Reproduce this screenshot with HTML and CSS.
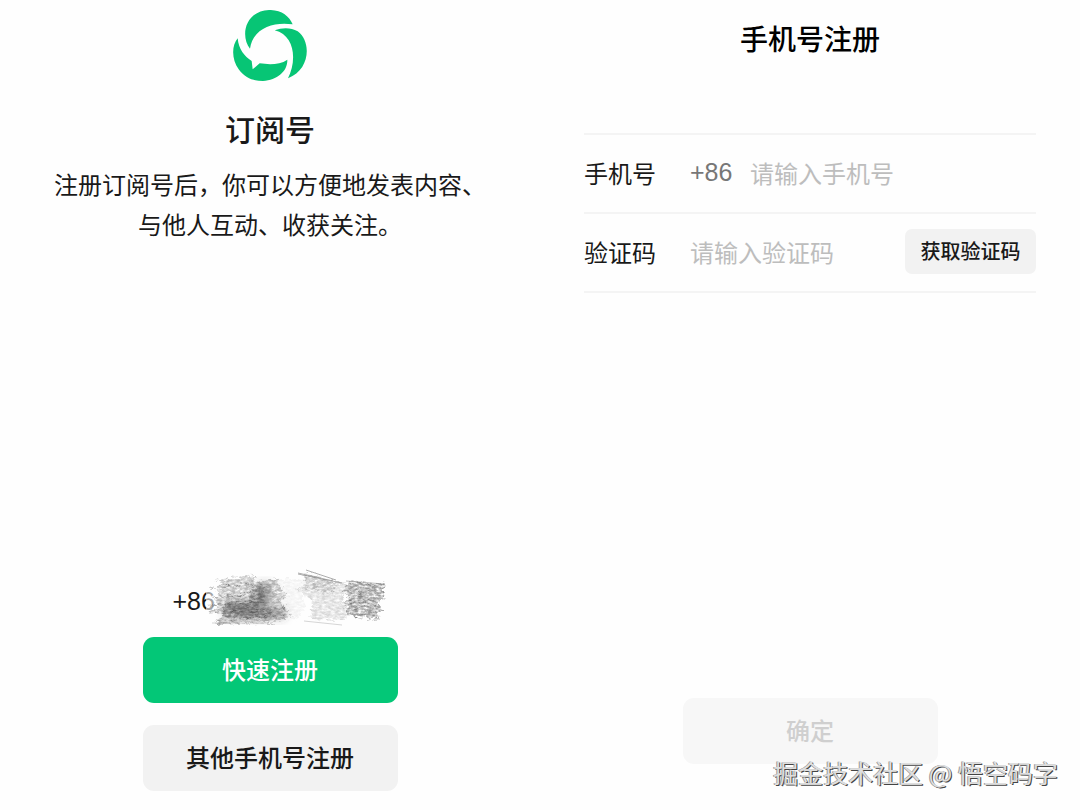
FILE: index.html
```
<!DOCTYPE html>
<html lang="zh-CN">

<head>
  <meta charset="UTF-8" />
  <meta name="viewport" content="width=device-width, initial-scale=1.0" />
  <title>手机号注册</title>
  <link rel="stylesheet" href="styles.css">
</head>

<body>
  <main class="page">
    <!-- 订阅号介绍 -->
    <section class="panel intro">
      <svg class="logo" viewBox="40 30 225 216" aria-hidden="true">
        <path d="M91 146 C62 110 74 34 148 30 C184 29 209 48 219 73 C163 64 99 84 91 146 Z" />
        <path d="M165 91 C188 82 214 82 234 94 C276 124 272 210 205 235 C232 182 226 106 165 91 Z" />
        <path d="M54 115 C36 137 35 176 57 208 C78 237 104 243 130 243 C173 240 204 214 203 179 C180 195 148 194 120 190 L99 208 L96 183 C74 169 57 148 54 115 Z" />
      </svg>
      <h1 class="intro-title">订阅号</h1>
      <p class="intro-text">注册订阅号后，你可以方便地发表内容、<br>与他人互动、收获关注。</p>

      <div class="actions">
        <div class="phone">
          <span class="phone-number">+86</span>
          <!-- 涂抹遮挡手机号 -->
          <svg class="scribble" viewBox="0 0 190 72" aria-hidden="true">
            <defs>
              <filter id="pencil" x="-5%" y="-10%" width="110%" height="120%">
                <feTurbulence type="fractalNoise" baseFrequency="0.22 0.5" numOctaves="3" seed="4" result="grain" />
                <feColorMatrix in="grain" type="matrix" values="0 0 0 0 0  0 0 0 0 0  0 0 0 0 0  0 0 0 2 -0.4" result="holes" />
                <feDisplacementMap in="SourceGraphic" in2="grain" scale="9" xChannelSelector="R" yChannelSelector="G" result="rough" />
                <feComposite in="rough" in2="holes" operator="in" />
                <feGaussianBlur stdDeviation="0.6" />
              </filter>
              <filter id="soft" x="-20%" y="-20%" width="140%" height="140%">
                <feGaussianBlur stdDeviation="4" />
              </filter>
            </defs>
            <path fill="#fefefe" opacity="0.6" d="M2 14 L26 14 L25 46 L2 46 Z" />
            <g filter="url(#pencil)">
              <path fill="#888" d="M12 14 L52 9 L51 16 L73 13 L78 24 L84 30 L76 36 L83 44 L82 54 L10 58 L20 49 L5 46 L16 40 L10 34 L17 28 L11 23 L20 18 Z" opacity="0.6" />
              <path fill="#888" d="M96 7 L144 19 L139 31 L143 54 L106 53 L108 34 L92 24 L105 17 Z" opacity="0.32" />
              <path fill="#888" d="M104 8 L136 17 L126 28 L98 22 Z" opacity="0.4" />
              <path fill="#777" d="M144 15 L182 18 L178 27 L180 31 L174 37 L178 43 L174 47 L176 54 L143 49 L140 38 L145 31 L140 25 Z" opacity="0.75" />
              <path fill="#999" d="M73 13 L102 13 L96 26 L103 40 L92 54 L80 48 Z" opacity="0.12" />
              <g fill="none" stroke="#666" stroke-width="1" opacity="0.6">
                <path d="M6 22 L50 18 M8 32 L60 26 M4 40 L52 36 M5 47 L85 42 M12 53 L88 50 M12 57 L69 57" />
                <path d="M147 19 L181 22 M144 25 L179 28 M146 30 L180 33 M142 36 L176 40 M146 42 L177 45 M144 48 L175 52" />
              </g>
            </g>
            <g filter="url(#soft)">
              <path fill="#444" opacity="0.5" d="M22 36 L50 35 L54 18 L66 17 L66 34 L60 42 L82 44 L80 52 L20 51 Z" />
            </g>
            <g filter="url(#pencil)">
              <path fill="#444" d="M20 36 L46 35 L48 20 L58 19 L60 34 L52 42 L68 44 L64 53 L18 51 Z" opacity="0.4" />
            </g>
            <g fill="none" stroke="#777" opacity="0.6">
              <path d="M94 7 L129 15 M102 4 L132 14 M94 8 L138 17" />
              <path d="M8 57 L65 57 M100 55 L138 59" opacity="0.5" />
              <path d="M142 15 L180 18" opacity="0.8" />
            </g>
            <path fill="none" stroke="#fff" stroke-width="2" opacity="0.7" d="M162 70 L174 69 L180 69" />
          </svg>
        </div>
        <button class="button button-primary" type="button">快速注册</button>
        <button class="button button-default" type="button">其他手机号注册</button>
      </div>
    </section>

    <!-- 手机号注册表单 -->
    <form class="panel register">
      <h2 class="register-title">手机号注册</h2>
      <div class="fields">
        <div class="field">
          <label class="field-label" for="phone">手机号</label>
          <span class="field-code">+86</span>
          <input class="field-input" id="phone" type="tel" placeholder="请输入手机号">
        </div>
        <div class="field">
          <label class="field-label" for="code">验证码</label>
          <input class="field-input" id="code" type="text" placeholder="请输入验证码">
          <button class="code-button" type="button">获取验证码</button>
        </div>
      </div>
      <button class="button button-confirm" type="submit" disabled>确定</button>
    </form>
  </main>

  <div class="watermark">掘金技术社区 @ 悟空码字</div>
</body>

</html>
```
FILE: styles.css
```
* {
  box-sizing: border-box;
}

body {
  margin: 0;
  background: #fefefe;
  color: #191919;
  font-family: "Noto Sans CJK SC", sans-serif;
  font-size: 24px;
}

button,
input {
  font-family: inherit;
}

.page {
  display: grid;
  grid-template-columns: minmax(0, 1fr) minmax(0, 1fr);
  min-height: 100vh;
}

.panel {
  display: flex;
  flex-direction: column;
  align-items: center;
}

/* 左侧 */
.intro {
  padding: 10px 20px 19px;
}

.logo {
  width: 75px;
  height: 72px;
  fill: #07c575;
}

.intro-title {
  margin: 26px 0 16px;
  font-size: 30px;
  font-weight: 500;
  line-height: 40px;
}

.intro-text {
  margin: 0;
  line-height: 40px;
  text-align: center;
}

.actions {
  display: flex;
  flex-direction: column;
  gap: 22px;
  width: 255px;
  margin-top: auto;
}

.phone {
  position: relative;
  padding-left: 30px;
  margin-bottom: -4px;
  line-height: 36px;
}

.phone-number,
.field-code {
  font-family: "Liberation Sans", Arial, sans-serif;
  font-size: 25px;
}

.scribble {
  position: absolute;
  top: -16px;
  left: 61px;
  width: 190px;
  height: 72px;
}

/* 按钮 */
.button {
  width: 255px;
  height: 66px;
  padding: 0 0 4px;
  border: none;
  border-radius: 11px;
  font-size: 24px;
  font-weight: 500;
  cursor: pointer;
}

.button-primary {
  background: #03c777;
  color: #fff;
}

.button-default {
  background: #f2f2f2;
  color: #191919;
}

.button-confirm {
  margin-top: auto;
  background: #f7f7f7;
  color: #cfcfcf;
  cursor: default;
}

/* 右侧 */
.register {
  padding: 18px 44px 46px;
}

.register-title {
  margin: 0 0 75px;
  color: #000;
  font-size: 28px;
  font-weight: 500;
  line-height: 40px;
}

.fields {
  width: 100%;
  border-top: 2px solid #f4f4f4;
}

.field {
  display: flex;
  align-items: center;
  height: 79px;
  padding-bottom: 2px;
  border-bottom: 2px solid #f4f4f4;
}

.field-label {
  flex: none;
  width: 106px;
}

.field-code {
  flex: none;
  width: 60px;
  color: #777;
}

.field-input {
  flex: 1;
  min-width: 0;
  padding: 0;
  border: none;
  outline: none;
  background: transparent;
  color: #191919;
  font-size: 24px;
}

.field-input::placeholder {
  color: #bdbdbd;
}

.code-button {
  flex: none;
  width: 131px;
  height: 45px;
  padding: 0 0 2px;
  border: none;
  border-radius: 7px;
  background: #f2f2f2;
  color: #191919;
  font-size: 20px;
  font-weight: 500;
  cursor: pointer;
}

/* 水印 */
.watermark {
  position: absolute;
  right: 22px;
  bottom: 19px;
  color: #dedede;
  font-size: 25px;
  line-height: 38px;
  text-shadow: -1px 0 0 #999, 1px 1px 0 #444;
}
```
